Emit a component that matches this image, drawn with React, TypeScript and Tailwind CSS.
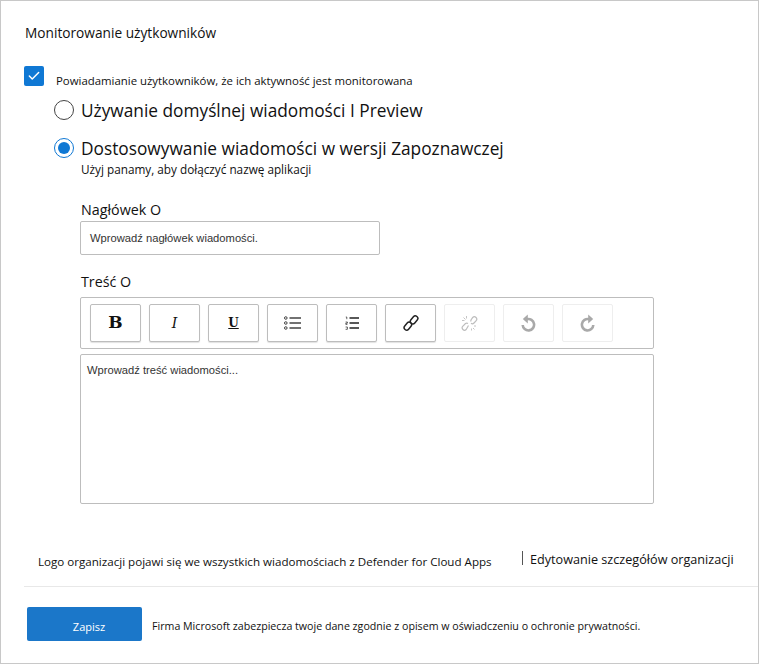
import { Check } from 'lucide-react';

const ui = "font-['Open_Sans','Noto_Sans',sans-serif]";
const arial = "font-['Liberation_Sans',Arial,sans-serif]";

const ToolButton = ({ children, off }: { children: React.ReactNode; off?: boolean }) => (
    <div className={`w-[51px] h-[38px] rounded-[2px] bg-white flex items-center justify-center ${off ? 'border border-[#eeeeee]' : 'border border-[#bdbdbd] shadow-[0_1px_1px_rgba(0,0,0,0.12)]'}`}>
        {children}
    </div>
);

const BulletIcon = () => (
    <svg width="17" height="14" viewBox="0 0 17 14" fill="none" stroke="#444">
        <circle cx="1.800" cy="2" r="1.300" />
        <circle cx="1.800" cy="7" r="1.300" />
        <circle cx="1.800" cy="12" r="1.300" />
        <path d="M5.500 2h11.500M5.500 7h11.500M5.500 12h11.500" strokeWidth="1.300" />
    </svg>
);

const NumberIcon = () => (
    <svg width="14" height="14" viewBox="0 0 14 14" fill="none" stroke="#222">
        <path d="M.8 1h1v2.200M.6 6h1.800v1.200H.8v1.200h1.600M.6 11h1.800v2.300H.6" strokeWidth=".7" />
        <path d="M4.500 2h9.500M4.500 7h9.500M4.500 12h9.500" strokeWidth="1.500" />
    </svg>
);

const LinkIcon = ({ color }: { color: string }) => (
    <svg width="16" height="16" viewBox="0 0 16 16" fill="none" stroke={color} strokeWidth="1.500">
        <rect x="-4.400" y="-2.500" width="8.800" height="5" rx="2.500" transform="translate(4.900 11.100) rotate(-50)" />
        <rect x="-4.400" y="-2.500" width="8.800" height="5" rx="2.500" transform="translate(11.100 4.900) rotate(-50)" />
    </svg>
);

const UnlinkIcon = () => (
    <svg width="17" height="17" viewBox="0 0 17 17" fill="none" stroke="#bdbdbd" strokeWidth="1.200">
        <path d="M7.500 10.500 5.200 14.500a2.300 2.300 0 0 1-3.300-3.300L4.500 8.500a2.300 2.300 0 0 1 2.500 0" />
        <path d="M10 6.500a2.300 2.300 0 0 1 0-1.500L11.700 2.500a2.300 2.300 0 0 1 3.300 3.300L13 8a2.300 2.300 0 0 1-3 .3" />
        <path d="M2.500 2.500 4.500 4.500M5.500 1v2.500M1 5.500h2.500M12 13l1.500 1.500M10.500 13.500v2M13 11h2" strokeWidth=".9" />
    </svg>
);

const UndoIcon = ({ flip }: { flip?: boolean }) => (
    <svg width="15" height="18" viewBox="0 0 15 18" fill="none" className={flip ? '-scale-x-100' : ''}>
        <path d="M6 5.200a5.700 5.700 0 1 1-4.300 5.800" stroke="#a9a9a9" strokeWidth="2.600" />
        <path d="M6.800 .6v9L1.800 5z" fill="#a9a9a9" />
    </svg>
);

export default function App() {
    return (
        <div className={`w-[759px] h-[664px] bg-white border border-[#c8c8c8] text-[#111] ${ui} overflow-hidden flex flex-col`}>
            <h1 className="ml-6 mt-[22px] h-5 text-[13.7px] leading-5 font-normal">Monitorowanie użytkowników</h1>

            <div className="ml-[23px] mt-[23px] flex items-start">
                <div className="w-5 h-5 rounded-[2px] bg-[#0f78d4] flex items-center justify-center">
                    <Check size={14} color="white" strokeWidth={2.500} />
                </div>
                <span className="ml-3 mt-[7px] text-[11.4px] leading-4">Powiadamianie użytkowników, że ich aktywność jest monitorowana</span>
            </div>

            <div className="ml-[53px] mt-[11px] flex items-center h-5">
                <div className="w-5 h-5 rounded-full border-[1.500px] border-[#444] bg-white" />
                <span className="ml-[7px] mt-[2px] text-[17.3px] leading-5">Używanie domyślnej wiadomości I Preview</span>
            </div>
            <div className="ml-[53px] mt-[18px] flex items-center h-5">
                <div className="w-5 h-5 rounded-full border-[1.500px] border-[#0f78d4] bg-white flex items-center justify-center">
                    <div className="w-3 h-3 rounded-full bg-[#0f78d4]" />
                </div>
                <span className="ml-[7px] mt-[2px] text-[17.3px] leading-5">Dostosowywanie wiadomości w wersji Zapoznawczej</span>
            </div>
            <p className="ml-20 mt-[3px] text-[11.75px] leading-4">Użyj panamy, aby dołączyć nazwę aplikacji</p>

            <div className="ml-[79px] w-[574px] mt-[23px]">
                <label className="block ml-[1px] text-[14.3px] leading-5">Nagłówek O</label>
                <div className={`mt-[1px] w-[300px] h-[34px] border border-[#bdbdbd] rounded-[2px] pl-[9px] flex items-center text-[11.2px] ${arial} text-[#333]`}>
                    Wprowadź nagłówek wiadomości.
                </div>
                <label className="block ml-[1px] mt-[17px] text-[14.3px] leading-5">Treść O</label>
                <div className="mt-[5px] h-[52px] border border-[#bdbdbd] rounded-[2px] flex items-center gap-2 pl-[9px]">
                    <ToolButton><span className="font-['DejaVu_Serif',serif] font-bold text-[17px]">B</span></ToolButton>
                    <ToolButton><span className="font-['DejaVu_Serif',serif] italic text-[14px]">I</span></ToolButton>
                    <ToolButton><span className="font-['DejaVu_Serif',serif] font-semibold underline text-[12px]">U</span></ToolButton>
                    <ToolButton><BulletIcon /></ToolButton>
                    <ToolButton><NumberIcon /></ToolButton>
                    <ToolButton><LinkIcon color="#222" /></ToolButton>
                    <ToolButton off><UnlinkIcon /></ToolButton>
                    <ToolButton off><UndoIcon /></ToolButton>
                    <ToolButton off><UndoIcon flip /></ToolButton>
                </div>
                <div className={`mt-[5px] h-[150px] border border-[#bdbdbd] rounded-[2px] pl-[6px] pt-[8px] text-[11.2px] leading-[14px] ${arial} text-[#333]`}>
                    Wprowadź treść wiadomości...
                </div>
            </div>

            <div className="mt-[43px] ml-[37px] h-[23px] flex items-start whitespace-nowrap">
                <span className="mt-[7px] w-[453px] text-[11.6px] leading-4">Logo organizacji pojawi się we wszystkich wiadomościach z Defender for Cloud Apps</span>
                <span className="ml-[31px] mt-[4px] w-px h-[14px] bg-[#555]" />
                <span className="ml-[7px] mt-[4px] text-[12.65px] leading-4">Edytowanie szczegółów organizacji</span>
            </div>

            <div className="ml-[23px] mt-[16px] h-px bg-[#e8e8e8]" />

            <div className="ml-[26px] mt-[20px] flex items-center">
                <button type="button" className="w-[115px] h-[34px] bg-[#1b77c9] rounded-[2px] text-white text-[11px] pl-[9px] pt-[6px]">Zapisz</button>
                <span className="ml-[10px] mt-[6px] text-[10.65px] whitespace-nowrap">Firma Microsoft zabezpiecza twoje dane zgodnie z opisem w oświadczeniu o ochronie prywatności.</span>
            </div>
        </div>
    );
}
